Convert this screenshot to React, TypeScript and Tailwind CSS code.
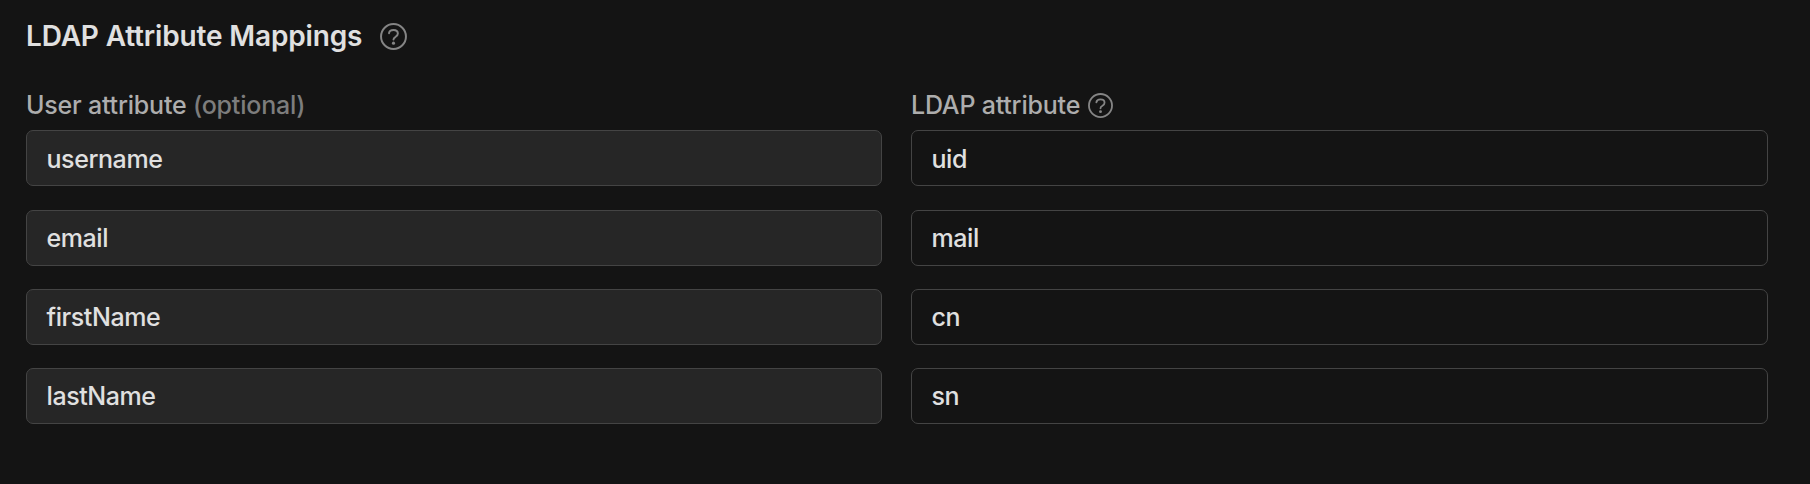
import React from "react";

function HelpIcon({ className }: { className: string }) {
  return (
    <svg className={`shrink-0 text-[#858585] ${className}`} viewBox="0 0 26 26" fill="none" stroke="currentColor" strokeWidth="1.9" strokeLinecap="round" strokeLinejoin="round">
      <circle cx="13" cy="13" r="12" />
      <path d="M8.7 9.8C9 7.7 10.7 6.7 13 6.7c2.6 0 4.2 1.4 4.2 3.4 0 1.6-.9 2.3-2.2 3.2-1.4.8-2 1.3-2 2.6" />
      <circle cx="13" cy="19.4" r="1.5" fill="currentColor" stroke="none" />
    </svg>
  );
}

const rows = [
  ["username", "uid"],
  ["email", "mail"],
  ["firstName", "cn"],
  ["lastName", "sn"],
];

export default function App() {
  return (
    <main className="h-[484px] w-[1810px] bg-[#141414] px-[26px] pt-[18px] font-['Inter',sans-serif] text-[#e0e0e0]">
      <header className="flex h-9 items-center gap-[18px]">
        <h2 className="text-[28px] font-semibold leading-9 tracking-[-0.15px]">LDAP Attribute Mappings</h2>
        <HelpIcon className="size-[27px]" />
      </header>
      <div className="mt-[34px] grid grid-cols-[856px_857px] gap-x-[29px] text-[25px] leading-[34px] font-[450] tracking-[-0.2px] text-[#adadad]">
        <div>User attribute <span className="text-[#7d7d7d]">(optional)</span></div>
        <div className="flex items-center gap-[8px]"><span>LDAP attribute</span><HelpIcon className="size-[25px]" /></div>
      </div>
      <div className="mt-[8.4px] flex flex-col gap-[23.2px] text-[25px] font-[450] tracking-[-0.42px]">
        {rows.map(([user, ldap]) => (
          <div key={user} className="grid grid-cols-[856px_857px] gap-x-[29px]">
            <div className="flex h-14 items-center rounded-[7px] border border-[#444444] bg-[#262626] px-[19.5px] pt-[2px]">{user}</div>
            <div className="flex h-14 items-center rounded-[7px] border border-[#444444] px-[19.5px] pt-[2px]">{ldap}</div>
          </div>
        ))}
      </div>
    </main>
  );
}
